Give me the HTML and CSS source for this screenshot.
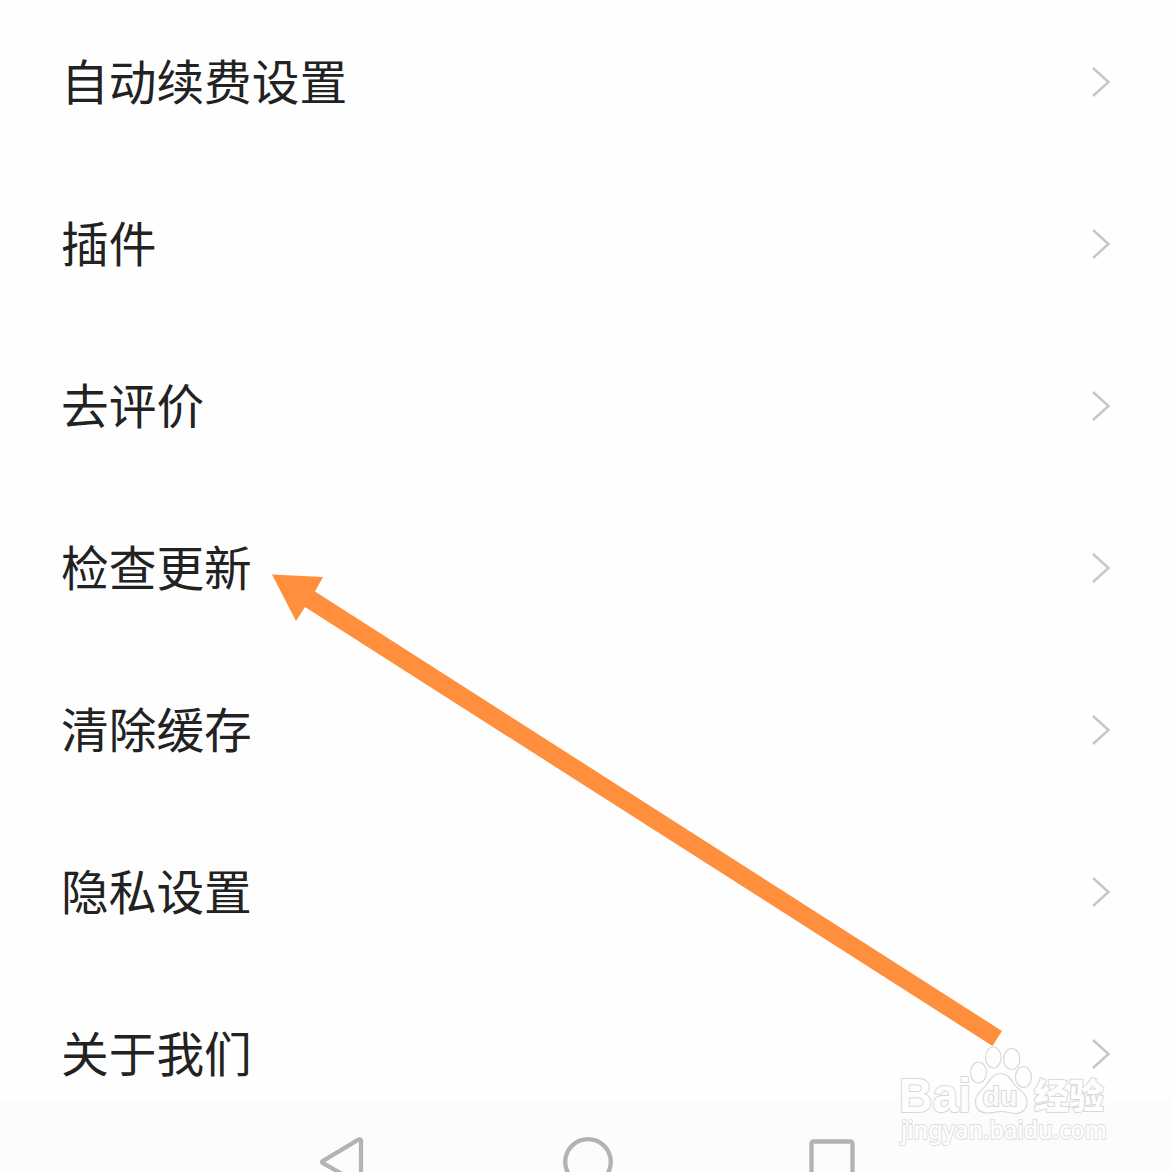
FILE: index.html
```html
<!DOCTYPE html>
<html lang="zh-CN">
<head>
<meta charset="utf-8">
<title>设置</title>
<link rel="stylesheet" href="styles.css">
</head>
<body>
<main class="screen">
  <ul class="list">
    <li class="row"><span>自动续费设置</span><svg class="chevron" viewBox="0 0 20 32"><path d="M2 2L17.500 16L2 30"/></svg></li>
    <li class="row"><span>插件</span><svg class="chevron" viewBox="0 0 20 32"><path d="M2 2L17.500 16L2 30"/></svg></li>
    <li class="row"><span>去评价</span><svg class="chevron" viewBox="0 0 20 32"><path d="M2 2L17.500 16L2 30"/></svg></li>
    <li class="row"><span>检查更新</span><svg class="chevron" viewBox="0 0 20 32"><path d="M2 2L17.500 16L2 30"/></svg></li>
    <li class="row"><span>清除缓存</span><svg class="chevron" viewBox="0 0 20 32"><path d="M2 2L17.500 16L2 30"/></svg></li>
    <li class="row"><span>隐私设置</span><svg class="chevron" viewBox="0 0 20 32"><path d="M2 2L17.500 16L2 30"/></svg></li>
    <li class="row"><span>关于我们</span><svg class="chevron" viewBox="0 0 20 32"><path d="M2 2L17.500 16L2 30"/></svg></li>
  </ul>
  <nav class="navbar">
    <svg class="nav-icon" viewBox="0 0 54 54"><path d="M42 6.500V48.500Q41 50 39 49L4.500 29.500Q1.500 28 4.500 26.500L39 5.800Q41.500 4.500 42 6.500Z"/></svg>
    <svg class="nav-icon" viewBox="0 0 54 54"><circle cx="25" cy="28" r="22.800"/></svg>
    <svg class="nav-icon" viewBox="0 0 54 54"><rect x="4.500" y="7.500" width="41" height="43" rx="2"/></svg>
  </nav>
  <svg class="arrow" viewBox="0 0 1172 1172"><path d="M272 574.500L323 577L315 591.500L1002 1031L992.500 1046L305 607L296 621Z"/></svg>
  <svg class="watermark" viewBox="880 1020 250 152">
    <g class="paw">
      <ellipse cx="978.500" cy="1072.500" rx="8" ry="10.500"/>
      <ellipse cx="993.300" cy="1057.500" rx="7.800" ry="10.500"/>
      <ellipse cx="1011.700" cy="1059" rx="8.200" ry="10.500"/>
      <ellipse cx="1023.500" cy="1077" rx="8" ry="10.500"/>
      <path d="M1000.500 1073.500C1007 1073.500 1010 1078 1014 1084C1018 1090 1027 1093 1027 1102C1027 1109 1022 1113.500 1016 1113.500C1010 1113.500 1007 1111.500 1001 1111.500C995 1111.500 992 1113.500 986 1113C979 1112.500 975.500 1108 975.500 1101C975.500 1093 983 1090 987 1084C991 1078 994 1073.500 1000.500 1073.500Z"/>
    </g>
    <text class="brand" x="899" y="1111.500" textLength="72" lengthAdjust="spacingAndGlyphs">Bai</text>
    <text class="du" x="982.500" y="1106" textLength="35" lengthAdjust="spacingAndGlyphs">du</text>
    <text class="brand-cn" x="1034" y="1108.500" textLength="70" lengthAdjust="spacingAndGlyphs">经验</text>
    <text class="url" x="901" y="1139" textLength="206" lengthAdjust="spacingAndGlyphs">jingyan.baidu.com</text>
  </svg>
</main>
</body>
</html>
```
FILE: styles.css
```css
* { box-sizing: border-box; }
body { margin: 0; background: #fefefe; font-family: "Noto Sans CJK SC", sans-serif; }
.screen { position: relative; width: 1172px; height: 1172px; overflow: hidden; display: grid; grid-template-rows: 1101px 71px; }
.list { list-style: none; margin: 0; padding: 1px 61px 0 61px; }
.row { height: 162px; display: flex; align-items: center; justify-content: space-between; font-size: 47.700px; line-height: 70px; color: #222; }
.row span { padding-bottom: 4px; }
.chevron { width: 20px; height: 32px; fill: none; stroke: #c6c6c6; stroke-width: 2.400; }
.navbar { background: #fcfcfc; display: flex; gap: 190px; padding: 33px 0 0 319px; overflow: hidden; }
.nav-icon { flex: none; width: 54px; height: 54px; fill: none; stroke: #b3b3b3; stroke-width: 4.300; }
.arrow { position: absolute; inset: 0; width: 1172px; height: 1172px; fill: #ff8f3c; }
.watermark { position: absolute; left: 880px; top: 1020px; width: 250px; height: 152px; }
.paw { fill: #fefefe; stroke: #d8d8d8; stroke-width: 1.200; }
.watermark text { fill: #fefefe; stroke: #d8d8d8; stroke-width: 2; paint-order: stroke; stroke-linejoin: round; }
.brand { font: 700 48px "Liberation Sans", sans-serif; }
.watermark .du { font: 700 28px "Liberation Sans", sans-serif; fill: #fbfbfb; }
.brand-cn { font: 900 35px "Noto Sans CJK SC", sans-serif; }
.watermark .url { font: 500 25px "Noto Sans", sans-serif; stroke: #dfdfdf; }
```
